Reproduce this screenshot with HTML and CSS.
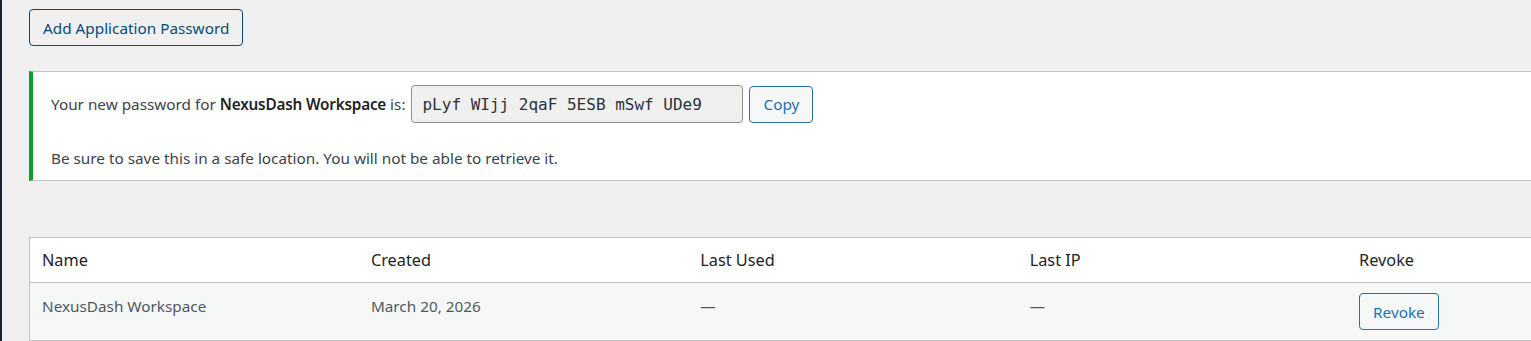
FILE: index.html
```html
<!DOCTYPE html>
<html lang="en">
<head>
    <meta charset="UTF-8" />
    <meta name="viewport" content="width=device-width, initial-scale=1.0" />
    <title>Application Passwords</title>
    <link rel="stylesheet" href="styles.css">
</head>
<body>
    <div class="wrap">
        <div class="create-box">
            <button class="button button-hover">Add Application Password</button>
        </div>

        <div class="notice notice-success">
            <div class="new-password">
                <label for="newPassword">Your new password for <strong>NexusDash Workspace</strong> is:</label>
                <input type="text" id="newPassword" class="code" value="pLyf WIjj 2qaF 5ESB mSwf UDe9" readonly />
                <button class="button">Copy</button>
            </div>
            <p class="description">Be sure to save this in a safe location. You will not be able to retrieve it.</p>
        </div>

        <table class="passwords-table">
            <thead>
                <tr>
                    <th>Name</th>
                    <th>Created</th>
                    <th>Last Used</th>
                    <th>Last IP</th>
                    <th>Revoke</th>
                </tr>
            </thead>
            <tbody>
                <tr>
                    <td>NexusDash Workspace</td>
                    <td>March 20, 2026</td>
                    <td>&mdash;</td>
                    <td>&mdash;</td>
                    <td><button class="button">Revoke</button></td>
                </tr>
            </tbody>
        </table>
    </div>
</body>
</html>
```

FILE: styles.css
```css
body {
    font-family: 'Segoe UI', 'Noto Sans', sans-serif;
    font-size: 15.3px;
    background: #f0f0f1;
    color: #3c434a;
    margin: 0;
    padding: 0;
    overflow: hidden;
}

.wrap {
    width: 1700px;
    min-height: 341px;
    border-left: 2px solid #1d2327;
    padding: 9px 0 0 27px;
    box-sizing: border-box;
}

.button {
    font-family: inherit;
    font-size: 15.3px;
    height: 37px;
    padding: 0 13px;
    color: #2271b1;
    background: #f6f7f7;
    border: 1px solid #2271b1;
    border-radius: 4px;
    cursor: pointer;
}

.button-hover {
    height: 37px;
    padding: 0 13px;
    color: #0a4b78;
    background: #f0f0f1;
    border-color: #0a4b78;
}

.notice {
    width: 1648px;
    margin-top: 25px;
    background: #fff;
    border: 1px solid #c3c4c7;
    border-left: 4px solid #00a32a;
    padding: 13px 18px 12px;
    box-sizing: border-box;
}

.new-password {
    display: flex;
    align-items: center;
    gap: 6px;
}

.new-password strong {
    color: #1d2327;
    font-weight: 600;
    letter-spacing: -0.2px;
}

.code {
    width: 332px;
    height: 38px;
    box-sizing: border-box;
    padding: 0 10px;
    font-family: Consolas, 'DejaVu Sans Mono', monospace;
    font-size: 16px;
    color: #2c3338;
    background: #f0f0f1;
    border: 1px solid #8c8f94;
    border-radius: 4px;
}

.description {
    margin: 25px 0 0;
    line-height: 20px;
}

.passwords-table {
    width: 1648px;
    margin-top: 56px;
    border-collapse: collapse;
    border: 1px solid #c3c4c7;
    table-layout: fixed;
}

.passwords-table th {
    text-align: left;
    font-weight: 400;
    font-size: 16.3px;
    color: #1d2327;
    height: 44px;
    padding: 0 12px;
    background: #fff;
    border-bottom: 1px solid #c3c4c7;
}

.passwords-table td {
    vertical-align: top;
    padding: 10px 12px;
    line-height: 26px;
    color: #50575e;
    background: #f6f7f7;
}
```
